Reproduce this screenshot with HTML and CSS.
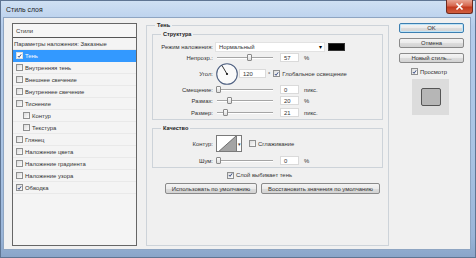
FILE: index.html
```html
<!DOCTYPE html>
<html lang="ru">
<head>
<meta charset="utf-8">
<title>Стиль слоя</title>
<link rel="stylesheet" href="styles.css">
</head>
<body>
<div class="win">
  <div class="titlebar">
    <span class="title">Стиль слоя</span>
    <div class="close">
      <svg width="9" height="7" viewBox="0 0 9 7"><path d="M1.5 0.5 L7.5 6.5 M7.5 0.5 L1.5 6.5" stroke="#fff" stroke-width="1.6"/></svg>
    </div>
  </div>
  <div class="client">
    <div class="list">
      <div class="list-head">Стили</div>
      <div class="item plain">Параметры наложения: Заказные</div>
      <div class="item sel"><span class="cb"><svg width="6" height="6" viewBox="0 0 6 6"><path d="M1 3 L2.5 4.6 L5 1" fill="none" stroke="#2a3f7a" stroke-width="1.1"/></svg></span>Тень</div>
      <div class="item"><span class="cb"></span>Внутренняя тень</div>
      <div class="item"><span class="cb"></span>Внешнее свечение</div>
      <div class="item"><span class="cb"></span>Внутреннее свечение</div>
      <div class="item"><span class="cb"></span>Тиснение</div>
      <div class="item sub"><span class="cb"></span>Контур</div>
      <div class="item sub"><span class="cb"></span>Текстура</div>
      <div class="item"><span class="cb"></span>Глянец</div>
      <div class="item"><span class="cb"></span>Наложение цвета</div>
      <div class="item"><span class="cb"></span>Наложение градиента</div>
      <div class="item"><span class="cb"></span>Наложение узора</div>
      <div class="item"><span class="cb"><svg width="6" height="6" viewBox="0 0 6 6"><path d="M1 3 L2.5 4.6 L5 1" fill="none" stroke="#2a3f7a" stroke-width="1.1"/></svg></span>Обводка</div>
    </div>

    <div class="group main">
      <span class="legend">Тень</span>
      <div class="group box-struct">
        <span class="legend">Структура</span>
        <div class="row">
          <span class="lbl">Режим наложения:</span>
          <div class="select"><span>Нормальный</span><span class="arrow">▾</span></div>
          <div class="swatch"></div>
        </div>
        <div class="row">
          <span class="lbl">Непрозр.:</span>
          <div class="slider"><span class="thumb" style="left:32px"></span></div>
          <div class="field">57</div>
          <span class="unit">%</span>
        </div>
        <div class="row row-angle">
          <span class="lbl">Угол:</span>
          <svg class="dial" width="22" height="22" viewBox="0 0 22 22">
            <circle cx="11" cy="11" r="10.3" fill="#fafafa" stroke="#4d5f80" stroke-width="1.1"/>
            <line x1="11" y1="11" x2="6" y2="2.5" stroke="#222" stroke-width="0.9"/>
            <circle cx="11" cy="11" r="1.1" fill="#111"/>
          </svg>
          <div class="field wide">120</div>
          <span class="deg">°</span>
          <span class="cb"><svg width="6" height="6" viewBox="0 0 6 6"><path d="M1 3 L2.5 4.6 L5 1" fill="none" stroke="#2a3f7a" stroke-width="1.1"/></svg></span>
          <span class="cbtext">Глобальное освещение</span>
        </div>
        <div class="row">
          <span class="lbl">Смещение:</span>
          <div class="slider"><span class="thumb" style="left:1px"></span></div>
          <div class="field">0</div>
          <span class="unit">пикс.</span>
        </div>
        <div class="row">
          <span class="lbl">Размах:</span>
          <div class="slider"><span class="thumb" style="left:12px"></span></div>
          <div class="field">20</div>
          <span class="unit">%</span>
        </div>
        <div class="row row-last">
          <span class="lbl">Размер:</span>
          <div class="slider"><span class="thumb" style="left:8px"></span></div>
          <div class="field">21</div>
          <span class="unit">пикс.</span>
        </div>
      </div>

      <div class="group box-quality">
        <span class="legend">Качество</span>
        <div class="row row-contour">
          <span class="lbl">Контур:</span>
          <div class="contour">
            <svg width="19" height="17" viewBox="0 0 19 17"><rect x="0" y="0" width="19" height="17" fill="#fff"/><path d="M0 17 L19 0 L19 17 Z" fill="#a4a4a4"/><path d="M0 17 L19 0" stroke="#555" stroke-width="0.8"/></svg>
          </div>
          <div class="contour-arrow">▾</div>
          <span class="cb gap"></span>
          <span class="cbtext">Сглаживание</span>
        </div>
        <div class="row row-noise">
          <span class="lbl">Шум:</span>
          <div class="slider"><span class="thumb" style="left:1px"></span></div>
          <div class="field">0</div>
          <span class="unit">%</span>
        </div>
      </div>

      <div class="knock">
        <span class="cb"><svg width="6" height="6" viewBox="0 0 6 6"><path d="M1 3 L2.5 4.6 L5 1" fill="none" stroke="#2a3f7a" stroke-width="1.1"/></svg></span>
        <span class="cbtext">Слой выбивает тень</span>
      </div>
      <div class="defaults">
        <div class="btn b-use">Использовать по умолчанию</div>
        <div class="btn b-reset">Восстановить значения по умолчанию</div>
      </div>
    </div>

    <div class="side">
      <div class="btn ok">OK</div>
      <div class="btn">Отмена</div>
      <div class="btn">Новый стиль...</div>
      <div class="preview-check">
        <span class="cb"><svg width="6" height="6" viewBox="0 0 6 6"><path d="M1 3 L2.5 4.6 L5 1" fill="none" stroke="#2a3f7a" stroke-width="1.1"/></svg></span>
        <span class="cbtext">Просмотр</span>
      </div>
      <div class="preview"><div class="preview-sq"></div></div>
    </div>
  </div>
</div>
</body>
</html>
```

FILE: styles.css
```css
* { box-sizing: border-box; }
html, body { margin: 0; padding: 0; }
body {
  width: 476px;
  height: 258px;
  overflow: hidden;
  font-family: "Liberation Sans", Arial, sans-serif;
  font-size: 5.9px;
  color: #333;
}
.win {
  width: 476px;
  height: 258px;
  border: 1px solid #5f7593;
  background: linear-gradient(#cfe0f3, #b4cceb 10%, #a9c3e3 60%, #9ab5d8 92%, #8aa5c9);
  display: flex;
  flex-direction: column;
}
.titlebar {
  height: 16px;
  flex: none;
  display: flex;
  align-items: center;
  padding-left: 5px;
  position: relative;
}
.title {
  font-family: "Liberation Sans", Arial, sans-serif;
  font-size: 6.9px;
  color: #1b1b1b;
}
.close {
  position: absolute;
  right: 2px;
  top: -1px;
  width: 27px;
  height: 14px;
  border: 1px solid #6e2a1e;
  border-top: none;
  border-radius: 0 0 3px 3px;
  background: linear-gradient(#e8a593, #d7674f 45%, #c23a1f 55%, #d2603f);
  display: flex;
  align-items: center;
  justify-content: center;
}
.client {
  flex: 1;
  margin: 0 4px 7px 2px;
  border: 1px solid #8ea5c2;
  background: #f0f0f0;
  display: flex;
  padding: 5px 6px 0 8px;
}

/* list */
.list {
  width: 125px;
  height: 223px;
  border: 1px solid #666;
  background: #f4f4f4;
  flex: none;
  display: flex;
  flex-direction: column;
}
.list-head {
  height: 14px;
  border-bottom: 1px solid #555;
  padding-left: 3px;
  display: flex;
  align-items: center;
  background: #f6f6f6;
}
.item {
  height: 12px;
  display: flex;
  align-items: center;
  padding-left: 3px;
  border-bottom: 1px solid #e9e9e9;
}
.item.plain { padding-left: 1px; }
.item.sub { padding-left: 10px; }
.item.sel { background: #3399ff; color: #fff; border-bottom-color: #3399ff; }
.item .cb { margin-right: 2px; }

.cb {
  width: 7px;
  height: 7px;
  flex: none;
  border: 1px solid #8e8f8f;
  background: linear-gradient(135deg, #dcdcdc, #fdfdfd);
  display: inline-flex;
  align-items: center;
  justify-content: center;
}
.cb svg { display: block; }
.item.sel .cb { background: #fff; border-color: #ddd; }
.cbtext { margin-left: 2px; }

/* groups */
.group {
  border: 1px solid #cdd3d9;
  position: relative;
}
.legend {
  position: absolute;
  top: -5px;
  left: 8px;
  padding: 0 2px;
  background: #f0f0f0;
  font-weight: bold;
  font-size: 5.6px;
  line-height: 8px;
  color: #222;
}
.main {
  width: 243px;
  height: 221px;
  margin: 2px 0 0 9px;
  padding: 8px 5px 0 5px;
  flex: none;
}
.main > .legend { left: 8px; }
.box-struct {
  padding-top: 6px;
  height: 86px;
}
.box-quality {
  margin-top: 8px;
  padding-top: 6px;
  height: 40px;
}
.row {
  display: flex;
  align-items: center;
  height: 11px;
}
.row-angle { height: 21px; }
.row-last { margin-top: 1px; }
.row-contour { height: 17px; }
.row-noise { margin-top: 3px; }
.lbl {
  width: 60px;
  flex: none;
  text-align: right;
  margin-right: 2px;
}
.select {
  width: 110px;
  height: 10px;
  background: #fff;
  border: 1px solid #e2e2e2;
  display: flex;
  align-items: center;
  justify-content: space-between;
  padding: 0 2px 0 3px;
}
.arrow { font-size: 6px; color: #000; }
.swatch {
  width: 17px;
  height: 8px;
  margin-left: 3px;
  background: #000;
  border: 1px solid #333;
}
.slider {
  width: 58px;
  height: 9px;
  position: relative;
  flex: none;
}
.slider::before {
  content: "";
  position: absolute;
  left: 2px;
  right: 0;
  top: 4px;
  height: 1px;
  background: #a5a5a5;
  box-shadow: 0 1px 0 #fff;
}
.thumb {
  position: absolute;
  top: 1px;
  width: 5px;
  height: 7px;
  border: 1px solid #8a8a8a;
  border-radius: 1px;
  background: linear-gradient(#fbfbfb, #dedede);
}
.field {
  width: 19px;
  height: 9px;
  margin-left: 7px;
  background: #fff;
  border: 1px solid #dadada;
  padding-left: 3px;
  display: flex;
  align-items: center;
  flex: none;
}
.field.wide { width: 27px; margin-left: 1px; }
.unit { margin-left: 5px; }
.dial { margin-left: 1px; flex: none; display: block; }
.deg { margin-left: 2px; margin-right: 3px; }
.contour {
  width: 20px;
  height: 17px;
  border: 1px solid #7a7a7a;
  border-right: none;
  overflow: hidden;
  margin-left: 1px;
}
.contour svg { display: block; }
.contour-arrow {
  width: 6px;
  height: 17px;
  border: 1px solid #7a7a7a;
  background: #fdfdfd;
  font-size: 5px;
  display: flex;
  align-items: center;
  justify-content: center;
}
.cb.gap { margin-left: 7px; }

.knock {
  display: flex;
  align-items: center;
  height: 10px;
  margin-top: 2px;
  padding-left: 75px;
}
.defaults {
  display: flex;
  margin-top: 3px;
  padding-left: 13px;
  gap: 4px;
}
.btn {
  height: 11px;
  border: 1px solid #8a8a8a;
  border-radius: 2px;
  background: linear-gradient(#f4f4f4, #ebebeb 50%, #dddddd 51%, #d2d2d2);
  display: flex;
  align-items: center;
  justify-content: center;
  white-space: nowrap;
}
.b-use { width: 92px; }
.b-reset { width: 119px; }

/* side */
.side {
  width: 65px;
  margin-left: 10px;
  flex: none;
  display: flex;
  flex-direction: column;
}
.side .btn { height: 10px; margin-bottom: 5px; }
.side .btn.ok {
  border-color: #3c7fb1;
  box-shadow: inset 0 0 0 1px #bfe4f7;
}
.preview-check {
  display: flex;
  align-items: center;
  height: 9px;
  margin-top: -1px;
  padding-left: 12px;
}
.preview {
  width: 37px;
  height: 36px;
  margin: 3px 0 0 13px;
  background: #dcdcdc;
  display: flex;
  align-items: center;
  justify-content: center;
}
.preview-sq {
  width: 20px;
  height: 18px;
  border: 1px solid #555;
  border-radius: 2px;
  background: #b6b6b6;
}
```
